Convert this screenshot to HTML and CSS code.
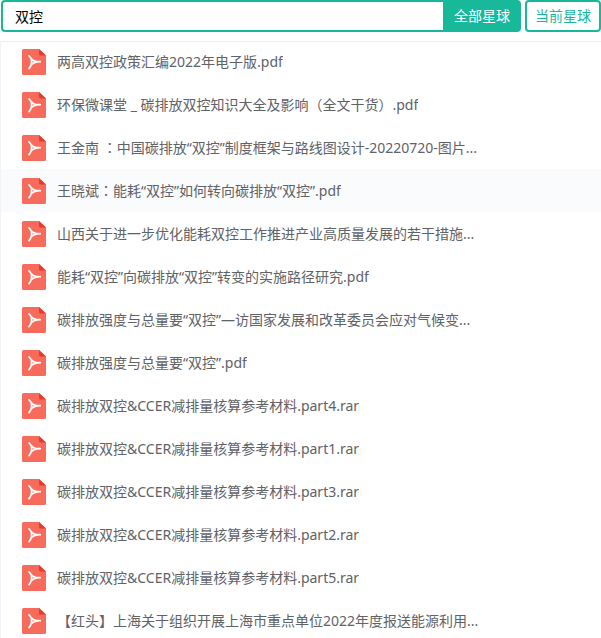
FILE: index.html
```html
<!DOCTYPE html>
<html lang="zh-CN">
<head>
    <meta charset="UTF-8">
    <meta name="viewport" content="width=device-width, initial-scale=1.0">
    <title>双控</title>
    <link rel="stylesheet" href="styles.css">
</head>
<body>
    <!-- File icon, shared by all rows -->
    <svg class="sprite" aria-hidden="true">
        <symbol id="pdf" viewBox="0 0 24 26">
            <path fill="#f76b5c" d="M1.500 0H17l7 6.500v18a1.500 1.500 0 0 1-1.500 1.500h-21A1.500 1.500 0 0 1 0 24.500v-23A1.500 1.500 0 0 1 1.500 0z"/>
            <path fill="#e93a29" d="M17 0l7 6.500h-5.500a1.500 1.500 0 0 1-1.500-1.500z"/>
            <path fill="none" stroke="#fff" stroke-width="1.700" stroke-linecap="round" stroke-linejoin="round" d="M7 6.800c1.200 1.200 1.800 2 2.300 3 1.200 1.300 2.700 2.300 4.500 2.600 1.500.2 3 .1 4.400.1M18.200 12.700c-3.600.1-7 1.200-9.200 3.200M9.300 9.800c.6 3.400.3 7-2.300 9.800"/>
        </symbol>
    </svg>

    <!-- Search bar -->
    <form class="search-bar">
        <input type="text" class="search-input" name="keyword" aria-label="搜索" value="双控">
        <button type="button" class="search-all">全部星球</button>
        <button type="button" class="search-current">当前星球</button>
    </form>

    <!-- Search results -->
    <ul class="file-list">
        <li class="file"><svg class="icon"><use href="#pdf"/></svg><span class="name">两高双控政策汇编2022年电子版.pdf</span></li>
        <li class="file"><svg class="icon"><use href="#pdf"/></svg><span class="name">环保微课堂 _ 碳排放双控知识大全及影响（全文干货）.pdf</span></li>
        <li class="file"><svg class="icon"><use href="#pdf"/></svg><span class="name">王金南 <span class="colon" lang="zh-TW">：</span>中国碳排放“双控”制度框架与路线图设计-20220720-图片...</span></li>
        <li class="file active"><svg class="icon"><use href="#pdf"/></svg><span class="name">王晓斌<span class="colon" lang="zh-TW">：</span>能耗“双控”如何转向碳排放“双控”.pdf</span></li>
        <li class="file"><svg class="icon"><use href="#pdf"/></svg><span class="name">山西关于进一步优化能耗双控工作推进产业高质量发展的若干措施...</span></li>
        <li class="file"><svg class="icon"><use href="#pdf"/></svg><span class="name">能耗“双控”向碳排放“双控”转变的实施路径研究.pdf</span></li>
        <li class="file"><svg class="icon"><use href="#pdf"/></svg><span class="name">碳排放强度与总量要“双控”—访国家发展和改革委员会应对气候变...</span></li>
        <li class="file"><svg class="icon"><use href="#pdf"/></svg><span class="name">碳排放强度与总量要“双控”.pdf</span></li>
        <li class="file"><svg class="icon"><use href="#pdf"/></svg><span class="name">碳排放双控&amp;CCER减排量核算参考材料.part4.rar</span></li>
        <li class="file"><svg class="icon"><use href="#pdf"/></svg><span class="name">碳排放双控&amp;CCER减排量核算参考材料.part1.rar</span></li>
        <li class="file"><svg class="icon"><use href="#pdf"/></svg><span class="name">碳排放双控&amp;CCER减排量核算参考材料.part3.rar</span></li>
        <li class="file"><svg class="icon"><use href="#pdf"/></svg><span class="name">碳排放双控&amp;CCER减排量核算参考材料.part2.rar</span></li>
        <li class="file"><svg class="icon"><use href="#pdf"/></svg><span class="name">碳排放双控&amp;CCER减排量核算参考材料.part5.rar</span></li>
        <li class="file"><svg class="icon"><use href="#pdf"/></svg><span class="name">【红头】上海关于组织开展上海市重点单位2022年度报送能源利用...</span></li>
    </ul>
</body>
</html>
```
FILE: styles.css
```css
body {
    margin: 0;
    background-color: #ffffff;
    color: #606266;
    font-family: "Noto Sans", "Noto Sans CJK SC", sans-serif;
    font-size: 14px;
}

.sprite {
    display: none;
}

/* Search bar */
.search-bar {
    display: flex;
    height: 32px;
    padding-left: 1px;
}

.search-input, .search-all, .search-current {
    box-sizing: border-box;
    border: 2px solid #18b99a;
    font-family: inherit;
    font-size: 14px;
    line-height: 20px;
}

.search-input {
    flex: 1;
    min-width: 0;
    padding: 2px 12px 0;
    border-right: none;
    border-radius: 4px 0 0 4px;
    color: #000000;
    outline: none;
}

.search-all, .search-current {
    padding: 0 8px;
    cursor: pointer;
}

.search-all {
    width: 78px;
    border-radius: 0 4px 4px 0;
    background-color: #18b99a;
    color: #ffffff;
}

.search-current {
    width: 76px;
    margin-left: 4px;
    border-radius: 4px;
    background-color: #ffffff;
    color: #18b99a;
}

/* Result rows */
.file-list {
    margin: 9px 0 0;
    padding: 0;
    list-style: none;
    border-top: 1px solid #ebeef0;
    border-left: 1px solid #f2f3f9;
}

.file {
    display: flex;
    align-items: center;
    gap: 11px;
    padding: 9px 21px 8px;
}

.file:first-child {
    padding-top: 7px;
}

.file.active, .file:hover {
    background-color: #fafbfd;
}

.icon {
    flex: none;
    width: 24px;
    height: 26px;
}

.name {
    overflow: hidden;
    line-height: 26px;
    white-space: nowrap;
    text-overflow: ellipsis;
}

/* Centred full-width colon */
.colon {
    font-family: "Noto Sans CJK TC", sans-serif;
    line-height: 1;
}
```
